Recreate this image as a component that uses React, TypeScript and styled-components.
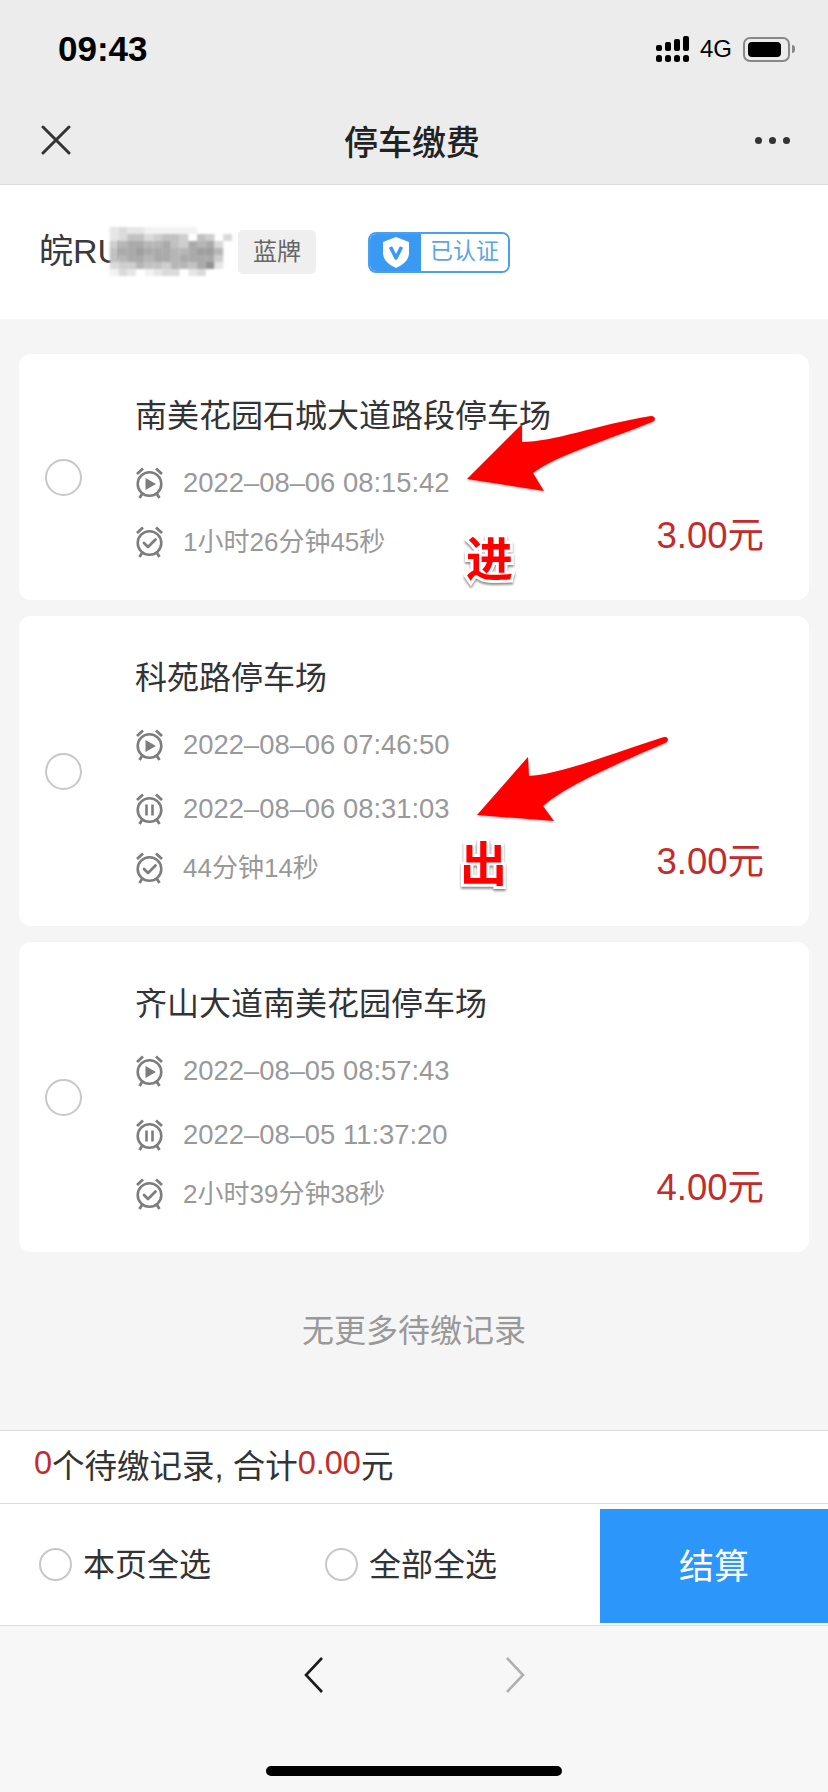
import React from "react";
import styled, { createGlobalStyle } from "styled-components";

const GlobalStyle = createGlobalStyle`
  html, body {
    margin: 0;
    padding: 0;
    background: #f5f5f5;
  }
  * {
    box-sizing: border-box;
  }
`;

type Kind = "start" | "stop" | "total";

interface RowData {
  kind: Kind;
  text: string;
}

interface RecordData {
  title: string;
  rows: RowData[];
  amount: string;
  note?: "in" | "out";
}

const records: RecordData[] = [
  {
    title: "南美花园石城大道路段停车场",
    rows: [
      { kind: "start", text: "2022–08–06 08:15:42" },
      { kind: "total", text: "1小时26分钟45秒" },
    ],
    amount: "3.00元",
    note: "in",
  },
  {
    title: "科苑路停车场",
    rows: [
      { kind: "start", text: "2022–08–06 07:46:50" },
      { kind: "stop", text: "2022–08–06 08:31:03" },
      { kind: "total", text: "44分钟14秒" },
    ],
    amount: "3.00元",
    note: "out",
  },
  {
    title: "齐山大道南美花园停车场",
    rows: [
      { kind: "start", text: "2022–08–05 08:57:43" },
      { kind: "stop", text: "2022–08–05 11:37:20" },
      { kind: "total", text: "2小时39分钟38秒" },
    ],
    amount: "4.00元",
  },
];

// blurred part of the plate number, one string per row, 0 = paper, 9 = darkest
const mosaic = [
  ".1211000000....",
  ".124423443.43 2",
  ".3566556436562.",
  ".4667666556775.",
  ".4566566566663.",
  ".2335443554681.",
  ".021.0122.12...",
];

const shade = (c: string) => {
  if (c === "." || c === " ") return "transparent";
  const v = 242 - Number(c) * 12;
  return `rgb(${v},${v},${v})`;
};

const AlarmIcon = ({ kind }: { kind: Kind }) => (
  <IconSvg viewBox="0 0 29 32">
    <circle cx="14.5" cy="17" r="11.8" fill="none" stroke="#7d7d7d" strokeWidth="2.6" />
    <path
      d="M2 7 8 1.5M27 7 21 1.5M7 27 4.5 31M22 27 24.5 31"
      fill="none"
      stroke="#7d7d7d"
      strokeWidth="2.8"
    />
    {kind === "start" && <path d="M10.5 11 21 17 10.5 23Z" fill="#7d7d7d" />}
    {kind === "stop" && (
      <path d="M11.5 11.5V22.5M17.5 11.5V22.5" fill="none" stroke="#7d7d7d" strokeWidth="2.6" />
    )}
    {kind === "total" && (
      <path
        d="M9 17 13 21 20.5 13.5"
        fill="none"
        stroke="#7d7d7d"
        strokeWidth="2.8"
        strokeLinecap="round"
        strokeLinejoin="round"
      />
    )}
  </IconSvg>
);

const App: React.FC = () => {
  return (
    <Page>
      <GlobalStyle />
      <Header>
        <StatusBar>
          <Clock>09:43</Clock>
          <StatusIcons>
            <svg width="33" height="26" viewBox="0 0 33 26">
              <g fill="#000">
                <rect x="0" y="9" width="6" height="6" rx="2" />
                <rect x="9" y="6" width="6" height="9" rx="2" />
                <rect x="18" y="3" width="6" height="12" rx="2" />
                <rect x="27" y="0" width="6" height="15" rx="2" />
                <rect x="0" y="19" width="6" height="7" rx="2.5" />
                <rect x="9" y="19" width="6" height="7" rx="2.5" />
                <rect x="18" y="19" width="6" height="7" rx="2.5" />
                <rect x="27" y="19" width="6" height="7" rx="2.5" />
              </g>
            </svg>
            <Network>4G</Network>
            <Battery>
              <BatteryLevel />
            </Battery>
          </StatusIcons>
        </StatusBar>
        <NavBar>
          <svg width="30" height="30" viewBox="0 0 30 30">
            <path d="M2 2 28 28M28 2 2 28" stroke="#333" strokeWidth="3" strokeLinecap="round" />
          </svg>
          <PageTitle>停车缴费</PageTitle>
          <MoreDots>
            <Dot />
            <Dot />
            <Dot />
          </MoreDots>
        </NavBar>
      </Header>

      <PlateBar>
        <PlateNumber>
          皖RU
          <Mosaic viewBox="0 0 120 49" width="131" height="49" preserveAspectRatio="none">
            {mosaic.map((line, y) =>
              line
                .split("")
                .map((c, x) => (
                  <rect key={`${x}-${y}`} x={x * 8} y={y * 7} width="8" height="7" fill={shade(c)} />
                )),
            )}
          </Mosaic>
        </PlateNumber>
        <PlateTag>蓝牌</PlateTag>
        <Verified>
          <VerifiedIcon>
            <svg width="26" height="31" viewBox="0 0 26 31">
              <path d="M13 0 26 5V16C26 23 20 28 13 31 6 28 0 23 0 16V5Z" fill="#fff" />
              <path
                d="M7.5 10 13 21 18.5 10"
                fill="none"
                stroke="#3a9af3"
                strokeWidth="3.6"
                strokeLinejoin="round"
              />
            </svg>
          </VerifiedIcon>
          <VerifiedText>已认证</VerifiedText>
        </Verified>
      </PlateBar>

      <List>
        {records.map((record) => (
          <Card key={record.title}>
            <Radio $size={37} />
            <CardBody>
              <CardTitle>{record.title}</CardTitle>
              {record.rows.map((row) => (
                <InfoRow key={row.kind} $kind={row.kind}>
                  <AlarmIcon kind={row.kind} />
                  <InfoText $small={row.kind === "total"}>{row.text}</InfoText>
                </InfoRow>
              ))}
            </CardBody>
            <Amount>{record.amount}</Amount>
            {record.note === "in" && (
              <>
                <Arrow $left={447} $top={61} viewBox="0 0 190 78" width="190" height="78">
                  <path
                    d="M1 64 56 9V27C88 27 130 10 185 1 190 1 190 6 186 7 150 22 90 40 67 58L78 76Z"
                    fill="#fe0000"
                  />
                </Arrow>
                <Note $left={447} $top={178}>
                  进
                </Note>
              </>
            )}
            {record.note === "out" && (
              <>
                <Arrow $left={457} $top={120} viewBox="0 0 194 86" width="194" height="86">
                  <path
                    d="M1 79 52 21 53 40C85 38 135 18 188 1 193 0 193 6 189 7 150 24 92 48 67 70L78 85Z"
                    fill="#fe0000"
                  />
                </Arrow>
                <Note $left={441} $top={221}>
                  出
                </Note>
              </>
            )}
          </Card>
        ))}
      </List>

      <NoMore>无更多待缴记录</NoMore>

      <Summary>
        <Red>0</Red>个待缴记录, 合计<Red>0.00</Red>元
      </Summary>

      <ActionBar>
        <SelectGroup>
          <SelectItem>
            <Radio $size={33} />
            <SelectLabel>本页全选</SelectLabel>
          </SelectItem>
          <SelectItem>
            <Radio $size={33} />
            <SelectLabel>全部全选</SelectLabel>
          </SelectItem>
        </SelectGroup>
        <PayButton>结算</PayButton>
      </ActionBar>

      <BottomNav>
        <Pager>
          <svg width="20" height="36" viewBox="0 0 20 36">
            <path d="M18 1 2 18 18 35" fill="none" stroke="#1c1c1c" strokeWidth="2.6" />
          </svg>
          <svg width="20" height="36" viewBox="0 0 20 36">
            <path d="M2 1 18 18 2 35" fill="none" stroke="#b0b0b0" strokeWidth="2.6" />
          </svg>
        </Pager>
        <HomeBar />
      </BottomNav>
    </Page>
  );
};

const sans = `"Liberation Sans", "Noto Sans CJK SC", sans-serif`;

const Page = styled.div`
  width: 828px;
  height: 1792px;
  display: flex;
  flex-direction: column;
  background: #f5f5f5;
  font-family: ${sans};
  overflow: hidden;
`;

const Header = styled.header`
  height: 185px;
  background: #ececec;
  border-bottom: 1px solid #dcdcdc;
`;

const StatusBar = styled.div`
  height: 100px;
  padding: 0 38px 2px 58px;
  display: flex;
  align-items: center;
  justify-content: space-between;
`;

const Clock = styled.span`
  font-size: 35px;
  font-weight: 700;
  color: #000;
`;

const StatusIcons = styled.div`
  display: flex;
  align-items: center;
  gap: 11px;
`;

const Network = styled.span`
  font-size: 24px;
  color: #000;
`;

const Battery = styled.div`
  position: relative;
  width: 47px;
  height: 25px;
  padding: 3px;
  border: 2px solid #888;
  border-radius: 7px;

  &::after {
    content: "";
    position: absolute;
    right: -7px;
    top: 6px;
    width: 3px;
    height: 8px;
    border-radius: 0 3px 3px 0;
    background: #888;
  }
`;

const BatteryLevel = styled.div`
  width: 33px;
  height: 15px;
  border-radius: 4px;
  background: #000;
`;

const NavBar = styled.div`
  height: 84px;
  padding: 0 38px 4px 41px;
  display: flex;
  align-items: center;
  justify-content: space-between;
`;

const PageTitle = styled.h1`
  margin: 0 0 0 -2px;
  font-size: 34px;
  font-weight: 500;
  color: #222;
`;

const MoreDots = styled.div`
  display: flex;
  gap: 7px;
`;

const Dot = styled.span`
  width: 7px;
  height: 7px;
  border-radius: 50%;
  background: #333;
`;

const PlateBar = styled.section`
  height: 134px;
  padding: 0 0 0 39px;
  display: flex;
  align-items: center;
  background: #fff;
`;

const PlateNumber = styled.div`
  width: 199px;
  display: flex;
  align-items: center;
  font-size: 34px;
  color: #3a3a3a;
  line-height: 44px;
  margin-top: -2px;
`;

const Mosaic = styled.svg`
  margin-left: -21px;
  flex: none;
  filter: blur(1px);
`;

const PlateTag = styled.span`
  width: 78px;
  height: 44px;
  padding-bottom: 5px;
  display: flex;
  align-items: center;
  justify-content: center;
  border-radius: 5px;
  background: #efefef;
  font-size: 24px;
  color: #666;
`;

const Verified = styled.div`
  width: 142px;
  height: 41px;
  margin-left: 52px;
  margin-top: 1px;
  display: flex;
  border: 2px solid #4a9fef;
  border-radius: 8px;
  overflow: hidden;
`;

const VerifiedIcon = styled.div`
  width: 51px;
  display: flex;
  align-items: center;
  justify-content: center;
  background: #3a9af3;
`;

const VerifiedText = styled.span`
  flex: 1;
  text-align: center;
  font-size: 23px;
  line-height: 35px;
  color: #5da6e4;
  background: #fff;
`;

const List = styled.main`
  padding: 35px 19px 0;
  display: flex;
  flex-direction: column;
  gap: 16px;
`;

const Card = styled.article`
  position: relative;
  display: flex;
  align-items: center;
  padding: 42px 45px 42px 26px;
  border-radius: 12px;
  background: #fff;
`;

const Radio = styled.span<{ $size: number }>`
  flex: none;
  width: ${({ $size }) => $size}px;
  height: ${({ $size }) => $size}px;
  border: 2px solid #c8c8c8;
  border-radius: 50%;
  background: #fff;
`;

const CardBody = styled.div`
  flex: 1;
  margin-left: 53px;
`;

const CardTitle = styled.h2`
  margin: 0;
  font-size: 32px;
  font-weight: 400;
  line-height: 40px;
  color: #333;
`;

const rowGaps: Record<Kind, number> = { start: 31, stop: 32, total: 27 };

const InfoRow = styled.div<{ $kind: Kind }>`
  height: 32px;
  display: flex;
  align-items: center;
  gap: 19px;
  margin-top: ${({ $kind }) => rowGaps[$kind]}px;
`;

const IconSvg = styled.svg`
  flex: none;
  width: 29px;
  height: 32px;
`;

const InfoText = styled.span<{ $small: boolean }>`
  font-size: ${({ $small }) => ($small ? 26 : 27.4)}px;
  line-height: 32px;
  color: #999;
`;

const Amount = styled.span`
  align-self: flex-end;
  font-size: 36.5px;
  line-height: 40px;
  margin-bottom: 2px;
  color: #c22c2c;
`;

const Arrow = styled.svg<{ $left: number; $top: number }>`
  position: absolute;
  left: ${({ $left }) => $left}px;
  top: ${({ $top }) => $top}px;
  filter: drop-shadow(0 1px 1px rgba(0, 0, 0, 0.3));
`;

const Note = styled.span<{ $left: number; $top: number }>`
  position: absolute;
  left: ${({ $left }) => $left}px;
  top: ${({ $top }) => $top}px;
  font-size: 47px;
  font-weight: 700;
  line-height: 56px;
  color: #f00;
  -webkit-text-stroke: 6px #fff;
  paint-order: stroke fill;
  filter: drop-shadow(0 2px 1px rgba(0, 0, 0, 0.45));
`;

const NoMore = styled.p`
  margin: 58px 0 0;
  font-size: 32px;
  line-height: 42px;
  text-align: center;
  color: #999;
`;

const Summary = styled.div`
  margin-top: 78px;
  height: 74px;
  padding: 0 0 7px 34px;
  display: flex;
  align-items: center;
  font-size: 32.5px;
  color: #333;
  background: #fff;
  border-top: 1px solid #ddd;
  border-bottom: 1px solid #ddd;
  white-space: pre;
`;

const Red = styled.span`
  color: #c22c2c;
`;

const ActionBar = styled.div`
  height: 122px;
  padding-top: 4px;
  display: flex;
  align-items: center;
  justify-content: space-between;
  background: #fff;
  border-bottom: 1px solid #ddd;
`;

const SelectGroup = styled.div`
  margin-top: -5px;
  padding-left: 39px;
  display: flex;
  gap: 114px;
`;

const SelectItem = styled.label`
  display: flex;
  align-items: center;
  gap: 11px;
  font-size: 32px;
  color: #333;
`;

const SelectLabel = styled.span`
  padding-bottom: 5px;
`;

const PayButton = styled.button`
  width: 228px;
  height: 114px;
  margin-top: -2px;
  border: 0;
  padding: 0 0 4px;
  background: #2c96fb;
  color: #fff;
  font-family: ${sans};
  font-size: 35px;
`;

const BottomNav = styled.nav`
  flex: 1;
  display: flex;
  flex-direction: column;
  align-items: center;
  background: #f7f7f7;
`;

const Pager = styled.div`
  margin-top: 31px;
  margin-left: 1px;
  display: flex;
  gap: 181px;
`;

const HomeBar = styled.div`
  width: 296px;
  height: 10px;
  margin-top: 73px;
  border-radius: 5px;
  background: #000;
`;

export default App;
